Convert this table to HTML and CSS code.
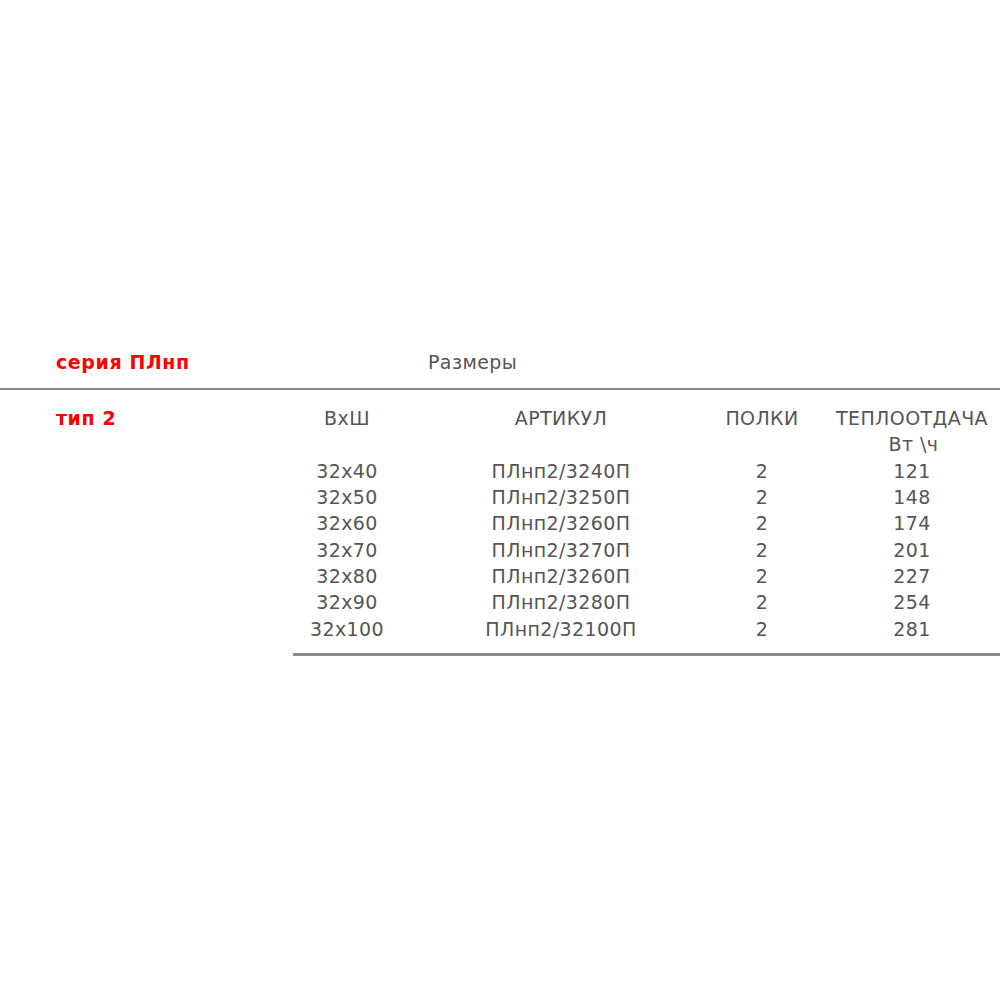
FILE: index.html
```html
<!DOCTYPE html>
<html lang="ru">
<head>
<meta charset="utf-8">
<link rel="stylesheet" href="styles.css">
</head>
<body>
<div class="page">
  <div class="head">
    <div class="series">серия ПЛнп</div>
    <div class="sizes">Размеры</div>
  </div>
  <div class="body">
    <div class="type">тип 2</div>
    <div class="tablewrap">
      <div class="table">
        <div class="th">ВхШ</div><div class="th">АРТИКУЛ</div><div class="th">ПОЛКИ</div><div class="th">ТЕПЛООТДАЧА</div>
        <div></div><div></div><div></div><div class="unit">Вт \ч</div>
        <div>32x40</div><div>ПЛнп2/3240П</div><div>2</div><div>121</div>
        <div>32x50</div><div>ПЛнп2/3250П</div><div>2</div><div>148</div>
        <div>32x60</div><div>ПЛнп2/3260П</div><div>2</div><div>174</div>
        <div>32x70</div><div>ПЛнп2/3270П</div><div>2</div><div>201</div>
        <div>32x80</div><div>ПЛнп2/3260П</div><div>2</div><div>227</div>
        <div>32x90</div><div>ПЛнп2/3280П</div><div>2</div><div>254</div>
        <div>32x100</div><div>ПЛнп2/32100П</div><div>2</div><div>281</div>
      </div>
    </div>
  </div>
</div>
</body>
</html>
```
FILE: styles.css
```css
html, body {
  margin: 0;
  padding: 0;
  background: #fff;
  overflow: hidden;
}
.page {
  width: 1000px;
  padding-top: 350px;
  font-family: "DejaVu Sans", Verdana, sans-serif;
  font-size: 19px;
  letter-spacing: 0.4px;
  color: #555;
}
.head {
  display: flex;
  align-items: center;
  height: 24px;
  border-bottom: 2px solid #8a8a8a;
  padding-bottom: 14px;
}
.series {
  color: #f00;
  font-weight: bold;
  letter-spacing: 0.6px;
  margin-left: 56px;
  width: 372px;
}
.sizes {
  color: #555;
}
.body {
  display: flex;
  padding-top: 15px;
}
.type {
  color: #f00;
  font-weight: bold;
  letter-spacing: 0.6px;
  margin-left: 56px;
  width: 237px;
  line-height: 26px;
}
.tablewrap {
  flex: 1;
  overflow: hidden;
  border-bottom: 3px solid #8a8a8a;
  padding-bottom: 11px;
}
.table {
  display: grid;
  grid-template-columns: 108px 320px 82px 218px;
  grid-auto-rows: 26.33px;
  text-align: center;
  width: 728px;
  align-items: center;
}
.unit {
  padding-left: 3px;
}
```
